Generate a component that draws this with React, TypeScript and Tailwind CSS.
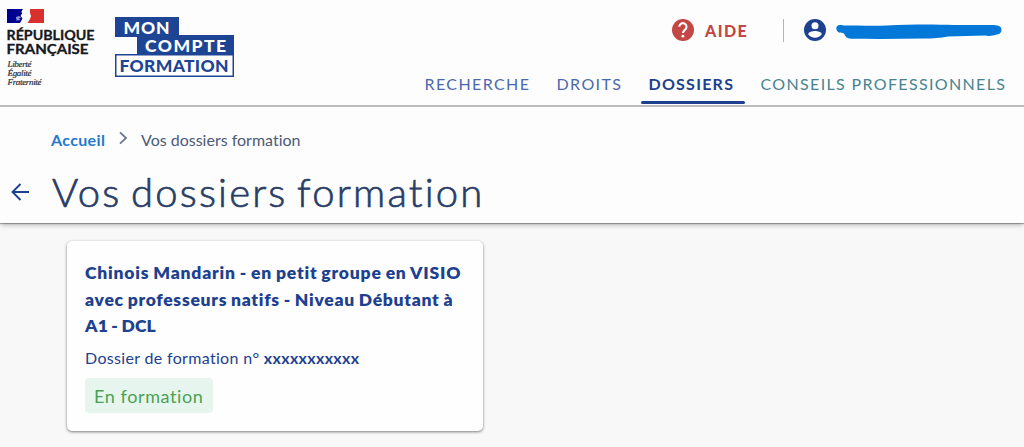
import React from 'react';

interface NavItem {
  label: string;
  className: string;
}

const navItems: NavItem[] = [
  { label: 'RECHERCHE', className: 'w-[132px] text-[#4a69ac] tracking-[1.4px]' },
  { label: 'DROITS', className: 'w-[92px] text-[#4a69ac] tracking-[1.4px]' },
  { label: 'DOSSIERS', className: 'w-[112px] text-[#1d418f] font-bold tracking-[1.25px]' },
  { label: 'CONSEILS PROFESSIONNELS', className: 'text-[#478490] tracking-[1.35px]' },
];

const RepubliqueLogo: React.FC = () => (
  <svg width="98" height="92" viewBox="0 0 98 92" className="shrink-0">
    <rect x="7" y="9" width="37" height="14" fill="#fff" />
    <path d="M7 9h16l-1.5 2.5.5 2-1.5 2.5 2 2.5L20 23H7z" fill="#000091" />
    <path d="M30 9h14v14H27.500l2.500-4 1-3-1-3z" fill="#d9302d" />
    <path d="M16 17l3-1 2 1.500-2 1 1.500 1.500-4 .5z" fill="#8f93cf" />
    <g fontFamily="Lato, sans-serif" fontWeight="700" fontSize="13.8" fill="#16181d" stroke="#16181d" strokeWidth="0.3">
      <text x="6.5" y="39.5" textLength="88" lengthAdjust="spacingAndGlyphs">RÉPUBLIQUE</text>
      <text x="6.5" y="54" textLength="82" lengthAdjust="spacingAndGlyphs">FRANÇAISE</text>
    </g>
    <g fontFamily="'Liberation Serif', serif" fontStyle="italic" fontSize="9" fill="#2b2d38" stroke="#2b2d38" strokeWidth="0.2">
      <text x="7.5" y="66.5" textLength="24">Liberté</text>
      <text x="7.5" y="75.7" textLength="24">Égalité</text>
      <text x="7.5" y="84.7" textLength="34">Fraternité</text>
    </g>
  </svg>
);

const CompteFormationLogo: React.FC = () => (
  <svg width="120" height="62" viewBox="0 0 120 62" className="mt-[16px] ml-[16px] shrink-0">
    <path d="M1 1h64v18h55v20H23V21H1z" fill="#1d4594" />
    <rect x="1.75" y="38.75" width="117.5" height="21.5" fill="#fff" stroke="#1d4594" strokeWidth="1.5" />
    <g fontFamily="Lato, sans-serif" fontWeight="900" fontSize="17.5">
      <text x="9.5" y="17.7" textLength="46" fill="#fff">MON</text>
      <text x="31" y="35.7" textLength="81" fill="#fff">COMPTE</text>
      <text x="5.5" y="55.7" textLength="109" fill="#1d4594">FORMATION</text>
    </g>
  </svg>
);

const Header: React.FC = () => (
  <header className="flex h-[107px] border-b-2 border-[#bdbdbd] bg-[#fdfdfd]">
    <RepubliqueLogo />
    <CompteFormationLogo />
    <div className="ml-auto flex w-[600px] shrink-0 flex-col">
      <div className="flex h-[60px] items-center pl-[247px]">
        <svg width="24" height="24" viewBox="0 0 24 24" className="shrink-0">
          <circle cx="12" cy="12" r="11" fill="#c34744" />
          <path d="M8.300 8.800a3.600 3.600 0 1 1 5.600 3c-1.200.9-1.900 1.500-1.900 3.300" fill="none" stroke="#fff" strokeWidth="2.100" />
          <circle cx="11.9" cy="18.2" r="1.400" fill="#fff" />
        </svg>
        <span className="ml-[10px] w-[78px] pt-[2px] text-[16px] font-black tracking-[1.4px] text-[#c34744]">AIDE</span>
        <span className="h-[23px] w-px shrink-0 bg-[#b5b5b5]" />
        <svg width="24" height="24" viewBox="0 0 24 24" className="ml-[19px] shrink-0">
          <circle cx="12" cy="12" r="11" fill="#1d418f" />
          <circle cx="12" cy="7.800" r="3.500" fill="#fff" />
          <path d="M5.200 16.300c0-2.300 4.500-3.300 6.800-3.300s6.800 1 6.800 3.300c-1.500 2.200-4 3.500-6.800 3.500s-5.300-1.300-6.800-3.500z" fill="#fff" />
        </svg>
        <svg width="168" height="18" viewBox="0 0 168 18" className="ml-[9px] shrink-0">
          <path
            d="M4 4C-1 4-.5 10 3 11.500c1 .5 4 0 5 1 1 3 3 5 7 5.300 24 .2 49 .2 74-.3 8 0 15-.5 23-2l37-1c5 1 8 0 12-1 5 0 6-7 2-8.500-2-1-5-1-8-1h-37c-25-1-45-.5-67 .5-15 .5-28 0-43 0-2-.5-3-.5-4-.5z"
            fill="#0378d9"
          />
        </svg>
      </div>
      <nav className="flex h-[45px] pl-[0.5px] text-[16px] leading-[24px] whitespace-nowrap">
        {navItems.map((item) => (
          <div key={item.label} className={`flex shrink-0 flex-col pt-[12px] ${item.className}`}>
            <span>{item.label}</span>
            {item.label === 'DOSSIERS' && (
              <span className="mt-[5px] -ml-[8px] h-[2.5px] w-[104px] rounded-full bg-[#1d418f]" />
            )}
          </div>
        ))}
      </nav>
    </div>
  </header>
);

const PageTitle: React.FC = () => (
  <section className="relative h-[116px] bg-[#fdfdfd] shadow-[0_3px_5px_-1px_rgba(0,0,0,0.25),0_1px_1px_rgba(0,0,0,0.3)]">
    <div className="flex h-[66px] items-center pl-[51px] text-[16px] whitespace-nowrap">
      <a className="w-[67px] font-bold tracking-[0.35px] text-[#2679cf]">Accueil</a>
      <svg width="11" height="14" viewBox="0 0 11 14" className="-mt-[5px] shrink-0">
        <path d="M2 1.300l6 5.700-6 5.700" fill="none" stroke="#6c7893" strokeWidth="1.800" />
      </svg>
      <span className="ml-[12px] text-[#4d5977]">Vos dossiers formation</span>
    </div>
    <div className="flex h-[40px] items-center pl-[10px]">
      <svg width="20" height="20" viewBox="0 0 20 20" className="-mt-[2px] shrink-0">
        <path d="M19 10H2.500M10.500 2L2.500 10l8 8" fill="none" stroke="#1d418f" strokeWidth="1.900" />
      </svg>
      <h1 className="-mt-[2px] ml-[22px] text-[40px] leading-[40px] font-light tracking-[2.200px] [word-spacing:-3.500px] whitespace-nowrap text-[#293d66] [-webkit-text-stroke:0.700px_#293d66]">
        Vos dossiers formation
      </h1>
    </div>
  </section>
);

const DossierCard: React.FC = () => (
  <article className="h-[190px] w-[416px] rounded-[5px] bg-[#fefefe] pt-[19px] pl-[18px] whitespace-nowrap text-[#1d418f] shadow-[0_1px_3px_rgba(0,0,0,0.5)]">
    <h2 className="text-[17.500px] leading-[26.500px] font-extrabold tracking-[0.800px] [word-spacing:-0.900px]">
      <span className="block">Chinois Mandarin - en petit groupe en VISIO</span>
      <span className="block tracking-[0.720px]">avec professeurs natifs - Niveau Débutant à</span>
      <span className="block tracking-[0.200px]">A1 - DCL</span>
    </h2>
    <p className="mt-[6px] text-[16px] leading-[24px] tracking-[0.330px]">
      Dossier de formation n° <b className="font-bold">xxxxxxxxxxx</b>
    </p>
    <span className="mt-[8px] flex h-[35px] w-[128px] items-center rounded-[4px] bg-[#e6f5ee] pt-[3px] pl-[9px] text-[18px] tracking-[0.600px] text-[#4ba151]">
      En formation
    </span>
  </article>
);

const App: React.FC = () => {
  return (
    <div className="h-[447px] w-[1024px] overflow-hidden bg-[#f8f8f8] font-['Lato',sans-serif] [font-variant-ligatures:none]">
      <Header />
      <PageTitle />
      <main className="pt-[18px] pl-[67px]">
        <DossierCard />
      </main>
    </div>
  );
};

export default App;
